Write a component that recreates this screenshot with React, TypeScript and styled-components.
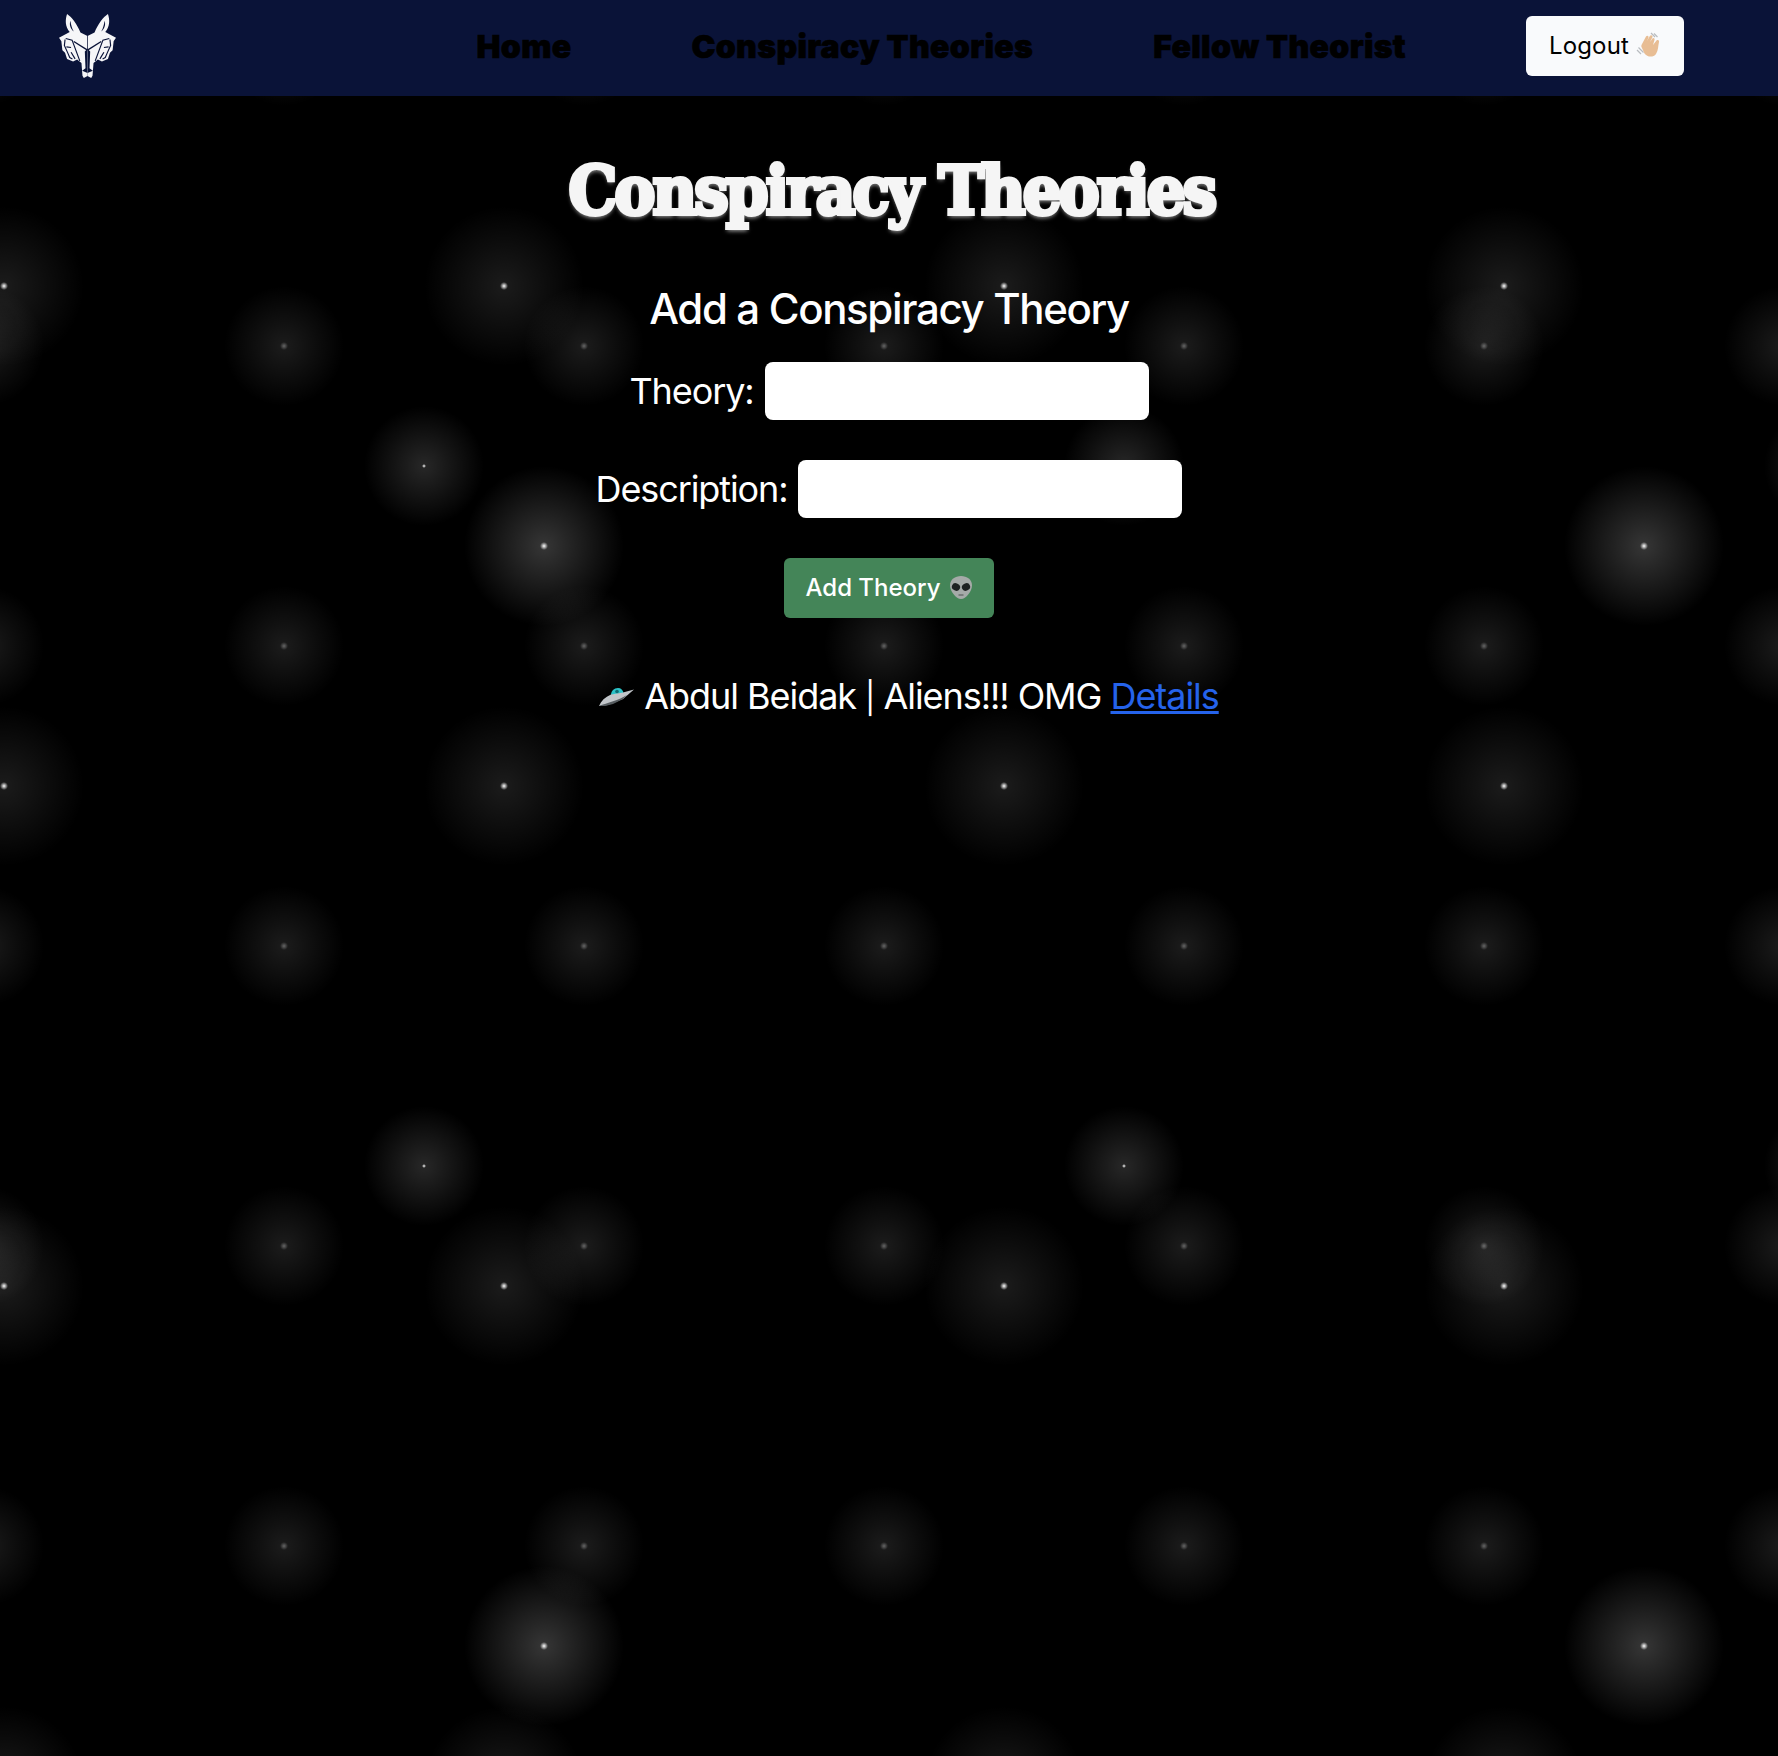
import React from "react";
import styled, { createGlobalStyle } from "styled-components";

const Global = createGlobalStyle`
  html, body { margin: 0; padding: 0; background: #000; }
  * { box-sizing: border-box; }
`;

const Page = styled.div`
  min-height: 100vh;
  background-color: #000;
  background-image:
    radial-gradient(circle, #fff, rgba(255,255,255,.2) 4px, transparent 80px),
    radial-gradient(circle, #fff, rgba(255,255,255,.15) 2px, transparent 60px),
    radial-gradient(circle, #fff, rgba(255,255,255,.1) 4px, transparent 80px),
    radial-gradient(circle, rgba(255,255,255,.4), rgba(255,255,255,.1) 4px, transparent 60px);
  background-size: 1100px 1100px, 700px 700px, 500px 500px, 300px 300px;
  background-position: -6px -4px, 74px 116px, 254px 536px, 134px 196px;
  font-family: Inter, "Liberation Sans", sans-serif;
  color: #fff;
`;

const Nav = styled.nav`
  height: 96px;
  background: #0a1338;
  display: flex;
  align-items: center;
  justify-content: space-between;
  padding: 0 94px 4px 59px;
`;

const NavGroup = styled.div`
  display: flex;
  align-items: center;
  gap: 120px;
`;

const NavLink = styled.a`
  font-family: Inter, sans-serif;
  font-weight: 900;
  font-size: 32px;
  letter-spacing: 0.35px;
  color: #000;
  -webkit-text-stroke: 0.7px #000;
  white-space: nowrap;
`;

const LogoutButton = styled.button`
  width: 158px;
  height: 60px;
  border: 0;
  border-radius: 6px;
  background: #f9fafc;
  color: #000;
  font-family: Inter, sans-serif;
  font-size: 24px;
  letter-spacing: 0.15px;
  padding: 0 0 2px;
  display: flex;
  align-items: center;
  justify-content: center;
  gap: 7px;
`;

const Main = styled.main`
  display: flex;
  flex-direction: column;
  align-items: center;
`;

const Title = styled.h1`
  margin: 52px 0 0 5px;
  font-family: "DejaVu Serif", serif;
  font-stretch: condensed;
  font-weight: 700;
  font-size: 68px;
  line-height: 84px;
  letter-spacing: -2.8px;
  color: #f5f5f5;
  -webkit-text-stroke: 4px #f5f5f5;
  text-shadow: 0 3px 4px rgba(255,255,255,.65);
  white-space: nowrap;
`;

const SubTitle = styled.h2`
  margin: 49px 0 0;
  font-size: 42px;
  line-height: 56px;
  font-weight: 500;
  letter-spacing: -1.35px;
  color: #fff;
`;

const Form = styled.form`
  margin-top: 25px;
  display: flex;
  flex-direction: column;
  align-items: center;
  gap: 40px;
`;

const Row = styled.div`
  display: flex;
  align-items: center;
  gap: 11px;
`;

const Label = styled.label`
  font-size: 36px;
  letter-spacing: -1.1px;
  color: #fff;
`;

const Input = styled.input`
  width: 384px;
  height: 58px;
  border: 0;
  border-radius: 8px;
  background: #fff;
`;

const AddButton = styled.button`
  width: 210px;
  height: 60px;
  border: 0;
  border-radius: 6px;
  background: #448558;
  color: #fff;
  font-family: Inter, sans-serif;
  font-size: 24px;
  font-weight: 500;
  padding: 0 0 2px;
  display: flex;
  align-items: center;
  justify-content: center;
  gap: 8px;
`;

const List = styled.ul`
  margin: 54px 0 0;
  padding: 0 0 0 40px;
  list-style: none;
`;

const Item = styled.li`
  display: flex;
  align-items: baseline;
  font-size: 36px;
  line-height: 48px;
  letter-spacing: -1.05px;
  white-space: pre;
`;

const Pipe = styled.span`
  font-size: 31px;
`;

const Details = styled.a`
  color: #2563eb;
  text-decoration: underline;
`;

const NAVY = "#0a1338";

const Wolf = () => {
  const half = (
    <>
      <path
        fill="#f6f6f8"
        d="M173 108L152 97C141 72 127 52 112 42C106 60 106 80 120 96L88 113L95 123L98 150L106 158L112 176L130 184L142 178L155 188L158 226L162 233L173 227Z"
      />
      <path fill={NAVY} d="M122 62C118 74 122 86 132 94C126 84 124 74 122 62Z" />
      <path stroke={NAVY} strokeWidth="4" fill="none" d="M132 124L173 150" />
      <path fill={NAVY} d="M173 146L165 154L167 204L157 211L173 218Z" />
      <path stroke={NAVY} strokeWidth="3.500" fill="none" d="M108 115L127 120L150 182" />
      <path stroke={NAVY} strokeWidth="3.500" fill="none" d="M106 118L104 136L114 158L120 172L128 176M110 140L124 142M124 156L136 176" />
    </>
  );
  return (
    <svg width="57" height="64" viewBox="88 42 170 191" aria-label="logo">
      {half}
      <g transform="translate(346 0) scale(-1 1)">{half}</g>
      <path stroke={NAVY} strokeWidth="2" d="M173 106V150" />
    </svg>
  );
};

const Hand = () => (
  <svg width="25" height="26" viewBox="0 0 25 26">
    <path stroke="#b9bcc0" strokeWidth="1.200" fill="none" d="M1 18l4 4M2.500 15.500l5 5M15 1l4 4M18 1.500l3.500 3.500" />
    <path fill="#e8bd94" d="M6 12L10 4.500C11 3 13 4 12.500 5.500L11 9L14 3.800C15 2.500 17 3.500 16.500 5L14 10L16.500 6.500C17.500 5.300 19 6.500 18.500 8L17 13L20.500 8.500C22 7.500 23.500 8.500 23 10C22 14 22.500 18 20 22C17 26 11 25 8.500 21.500L5.500 15C5 14 5.500 13 6 12Z" />
  </svg>
);

const Alien = () => (
  <svg width="24" height="23" viewBox="0 0 24 23">
    <path fill="#a5aaa8" d="M12 0C18 0 23 3.500 23 9.500C23 15 17 23 12 23C7 23 1 15 1 9.500C1 3.500 6 0 12 0Z" />
    <ellipse cx="7" cy="11" rx="4.200" ry="3.600" fill="#1e2222" transform="rotate(25 7 11)" />
    <ellipse cx="17" cy="11" rx="4.200" ry="3.600" fill="#1e2222" transform="rotate(-25 17 11)" />
    <path stroke="#4c5150" strokeWidth="1" fill="none" d="M9.500 19h5" />
  </svg>
);

const UfoIcon = styled.svg`
  align-self: center;
  margin-right: 10px;
`;

const Ufo = () => (
  <UfoIcon width="35" height="18" viewBox="0 0 35 18">
    <path fill="#2cc3c9" d="M12 7C12 3 15 0 19 0C22 0 24 2 24.500 5Z" />
    <path fill="#c2c6ca" d="M35 1.500L24 11L9 17L0 18C2 13 6 9 12 6.500L24 4.500Z" />
    <path fill="#565c60" d="M0 18C8 15 20 12 28 7L24 11L14 16L6 18Z" />
    <circle cx="18" cy="3.500" r="1.800" fill="#0f6f77" />
  </UfoIcon>
);

export default function App() {
  return (
    <Page>
      <Global />
      <Nav>
        <Wolf />
        <NavGroup>
          <NavLink>Home</NavLink>
          <NavLink>Conspiracy Theories</NavLink>
          <NavLink>Fellow Theorist</NavLink>
          <LogoutButton>Logout <Hand /></LogoutButton>
        </NavGroup>
      </Nav>
      <Main>
        <Title>Conspiracy Theories</Title>
        <SubTitle>Add a Conspiracy Theory</SubTitle>
        <Form>
          <Row>
            <Label>Theory:</Label>
            <Input />
          </Row>
          <Row>
            <Label>Description:</Label>
            <Input />
          </Row>
          <AddButton>Add Theory <Alien /></AddButton>
        </Form>
        <List>
          <Item><Ufo />Abdul Beidak <Pipe>|</Pipe> Aliens!!! OMG <Details>Details</Details></Item>
        </List>
      </Main>
    </Page>
  );
}
